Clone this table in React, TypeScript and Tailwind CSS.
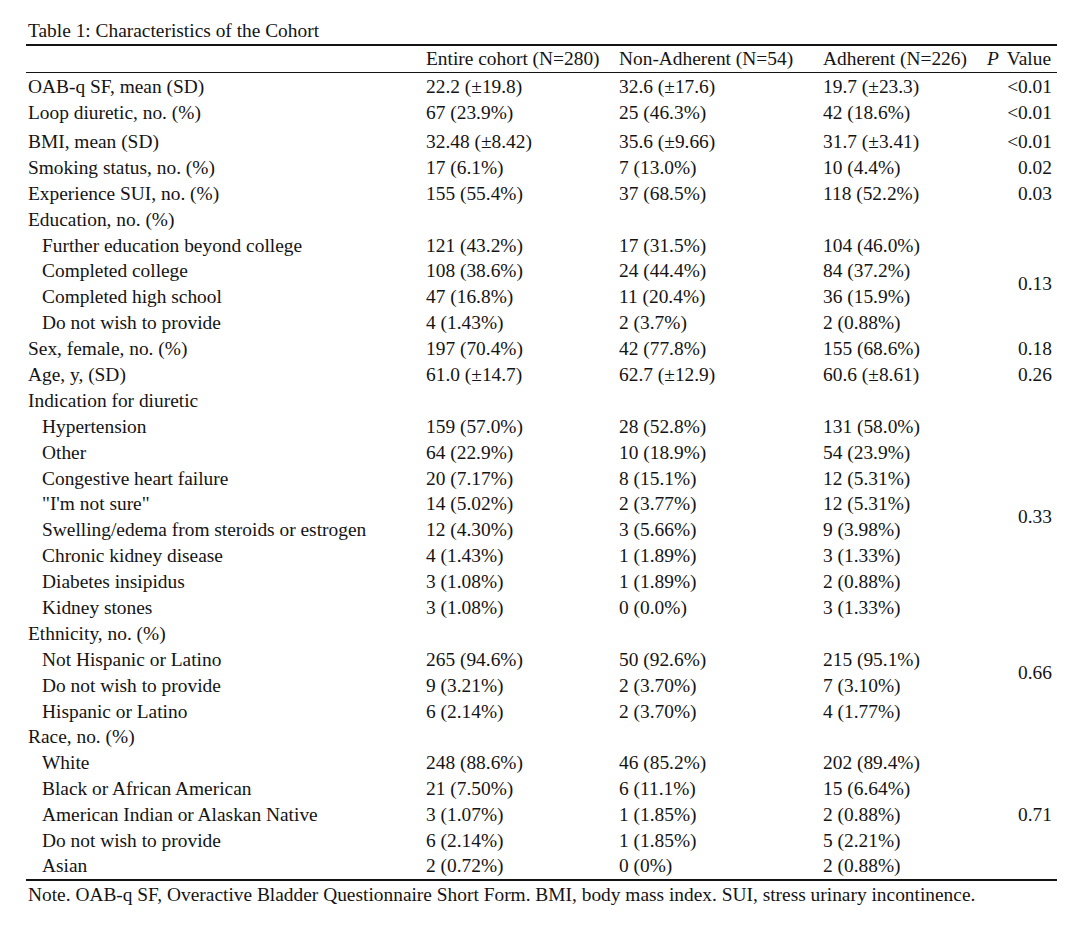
import React from "react";

type Row = {
  label: string;
  indent?: boolean;
  a?: string;
  b?: string;
  c?: string;
  p?: string;
  span?: number;
  skipP?: boolean;
  extra?: boolean;
};

const rows: Row[] = [
  { label: "OAB-q SF, mean (SD)", a: "22.2 (±19.8)", b: "32.6 (±17.6)", c: "19.7 (±23.3)", p: "<0.01" },
  { label: "Loop diuretic, no. (%)", a: "67 (23.9%)", b: "25 (46.3%)", c: "42 (18.6%)", p: "<0.01" },
  { label: "BMI, mean (SD)", a: "32.48 (±8.42)", b: "35.6 (±9.66)", c: "31.7 (±3.41)", p: "<0.01", extra: true },
  { label: "Smoking status, no. (%)", a: "17 (6.1%)", b: "7 (13.0%)", c: "10 (4.4%)", p: "0.02" },
  { label: "Experience SUI, no. (%)", a: "155 (55.4%)", b: "37 (68.5%)", c: "118 (52.2%)", p: "0.03" },
  { label: "Education, no. (%)", p: "" },
  { label: "Further education beyond college", indent: true, a: "121 (43.2%)", b: "17 (31.5%)", c: "104 (46.0%)", p: "0.13", span: 4 },
  { label: "Completed college", indent: true, a: "108 (38.6%)", b: "24 (44.4%)", c: "84 (37.2%)", skipP: true },
  { label: "Completed high school", indent: true, a: "47 (16.8%)", b: "11 (20.4%)", c: "36 (15.9%)", skipP: true },
  { label: "Do not wish to provide", indent: true, a: "4 (1.43%)", b: "2 (3.7%)", c: "2 (0.88%)", skipP: true },
  { label: "Sex, female, no. (%)", a: "197 (70.4%)", b: "42 (77.8%)", c: "155 (68.6%)", p: "0.18" },
  { label: "Age, y, (SD)", a: "61.0 (±14.7)", b: "62.7 (±12.9)", c: "60.6 (±8.61)", p: "0.26" },
  { label: "Indication for diuretic", p: "" },
  { label: "Hypertension", indent: true, a: "159 (57.0%)", b: "28 (52.8%)", c: "131 (58.0%)", p: "0.33", span: 8 },
  { label: "Other", indent: true, a: "64 (22.9%)", b: "10 (18.9%)", c: "54 (23.9%)", skipP: true },
  { label: "Congestive heart failure", indent: true, a: "20 (7.17%)", b: "8 (15.1%)", c: "12 (5.31%)", skipP: true },
  { label: "\"I'm not sure\"", indent: true, a: "14 (5.02%)", b: "2 (3.77%)", c: "12 (5.31%)", skipP: true },
  { label: "Swelling/edema from steroids or estrogen", indent: true, a: "12 (4.30%)", b: "3 (5.66%)", c: "9 (3.98%)", skipP: true },
  { label: "Chronic kidney disease", indent: true, a: "4 (1.43%)", b: "1 (1.89%)", c: "3 (1.33%)", skipP: true },
  { label: "Diabetes insipidus", indent: true, a: "3 (1.08%)", b: "1 (1.89%)", c: "2 (0.88%)", skipP: true },
  { label: "Kidney stones", indent: true, a: "3 (1.08%)", b: "0 (0.0%)", c: "3 (1.33%)", skipP: true },
  { label: "Ethnicity, no. (%)", p: "0.66", span: 4 },
  { label: "Not Hispanic or Latino", indent: true, a: "265 (94.6%)", b: "50 (92.6%)", c: "215 (95.1%)", skipP: true },
  { label: "Do not wish to provide", indent: true, a: "9 (3.21%)", b: "2 (3.70%)", c: "7 (3.10%)", skipP: true },
  { label: "Hispanic or Latino", indent: true, a: "6 (2.14%)", b: "2 (3.70%)", c: "4 (1.77%)", skipP: true },
  { label: "Race, no. (%)", p: "" },
  { label: "White", indent: true, a: "248 (88.6%)", b: "46 (85.2%)", c: "202 (89.4%)", p: "0.71", span: 5 },
  { label: "Black or African American", indent: true, a: "21 (7.50%)", b: "6 (11.1%)", c: "15 (6.64%)", skipP: true },
  { label: "American Indian or Alaskan Native", indent: true, a: "3 (1.07%)", b: "1 (1.85%)", c: "2 (0.88%)", skipP: true },
  { label: "Do not wish to provide", indent: true, a: "6 (2.14%)", b: "1 (1.85%)", c: "5 (2.21%)", skipP: true },
  { label: "Asian", indent: true, a: "2 (0.72%)", b: "0 (0%)", c: "2 (0.88%)", skipP: true },
];

export default function App() {
  return (
    <div
      className="w-[1080px] h-[930px] bg-white text-[#141414] pt-[20px] pl-[26px]"
      style={{ fontFamily: '"Liberation Serif", "Times New Roman", serif' }}
    >
      <div className="pl-[2px] text-[19.4px] leading-[22px] h-[24px]">Table 1: Characteristics of the Cohort</div>
      <table className="w-[1031px] table-fixed border-collapse text-[19.4px] leading-[22px]">
        <colgroup>
          <col className="w-[400px]" />
          <col className="w-[193px]" />
          <col className="w-[204px]" />
          <col className="w-[152px]" />
          <col className="w-[82px]" />
        </colgroup>
        <thead>
          <tr className="h-[27px] border-t-2 border-b-[1.5px] border-[#141414]">
            <th className="p-0"></th>
            <th className="p-0 text-left font-normal whitespace-nowrap">Entire cohort (N=280)</th>
            <th className="p-0 text-left font-normal whitespace-nowrap">Non-Adherent (N=54)</th>
            <th className="p-0 text-left font-normal whitespace-nowrap">Adherent (N=226)</th>
            <th className="p-0 pr-[6px] text-right font-normal whitespace-nowrap">
              <span className="italic">P</span>
              <span className="ml-[8px]">Value</span>
            </th>
          </tr>
        </thead>
        <tbody className="border-b-2 border-[#141414]">
          {rows.map((r, i) => (
            <tr key={i} className={r.extra ? "h-[29px] align-bottom" : i === 0 ? "h-[28px] align-bottom" : "h-[25.9px]"}>
              <td className={`p-0 whitespace-nowrap ${r.indent ? "pl-[16px]" : "pl-[2px]"} ${r.extra ? "pb-[2px]" : i === 0 ? "pb-[2px]" : ""}`}>
                {r.label}
              </td>
              <td className={`p-0 whitespace-nowrap ${r.extra || i === 0 ? "pb-[2px]" : ""}`}>{r.a}</td>
              <td className={`p-0 whitespace-nowrap ${r.extra || i === 0 ? "pb-[2px]" : ""}`}>{r.b}</td>
              <td className={`p-0 whitespace-nowrap ${r.extra || i === 0 ? "pb-[2px]" : ""}`}>{r.c}</td>
              {!r.skipP && (
                <td
                  rowSpan={r.span ?? 1}
                  className={`p-0 pr-[5px] text-right whitespace-nowrap align-middle ${r.extra || i === 0 ? "pb-[2px] !align-bottom" : ""}`}
                >
                  {r.p}
                </td>
              )}
            </tr>
          ))}
        </tbody>
      </table>
      <div className="pl-[2px] pt-[3px] text-[19.4px] leading-[22px]">
        Note. OAB-q SF, Overactive Bladder Questionnaire Short Form. BMI, body mass index. SUI, stress urinary incontinence.
      </div>
    </div>
  );
}
